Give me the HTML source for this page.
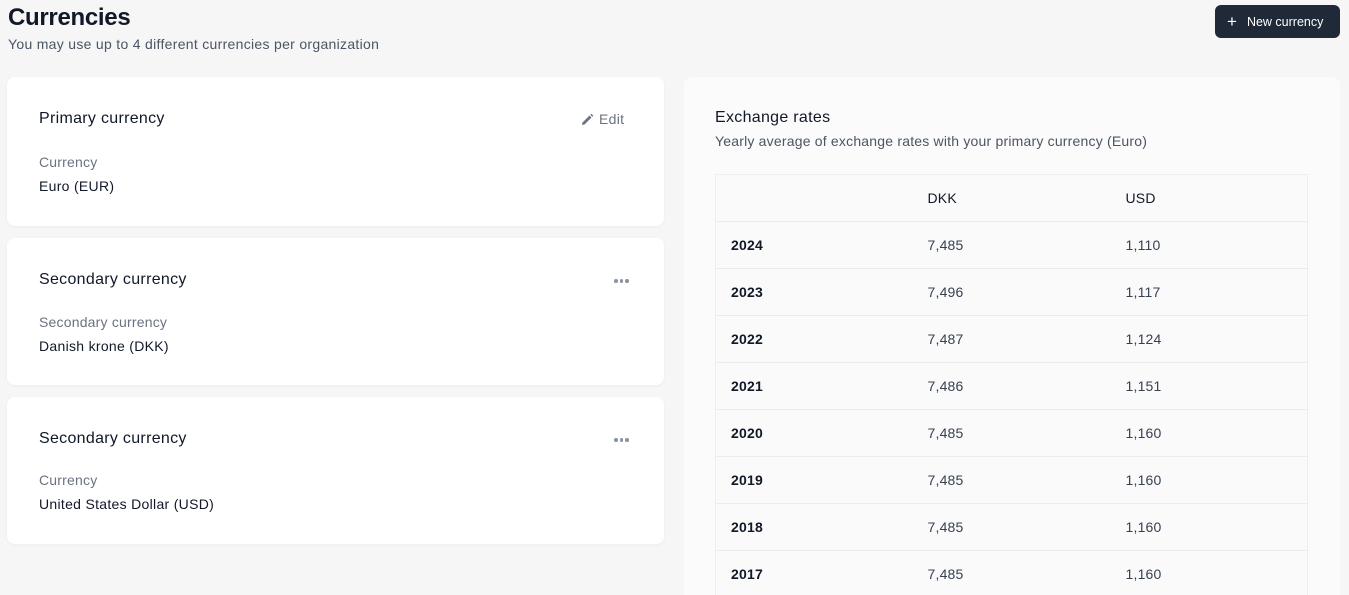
<!DOCTYPE html>
<html><head><meta charset="utf-8"><style>
*{box-sizing:border-box;margin:0;padding:0}
html,body{width:1349px;height:595px;overflow:hidden}
body{background:#f6f6f6;font-family:"Liberation Sans",sans-serif;color:#111827;position:relative}
.abs{position:absolute}
h1{position:absolute;left:8px;top:4px;font-size:24px;font-weight:700;color:#111827;letter-spacing:-0.3px}
.sub{left:8px;top:36px;font-size:14px;color:#4b5563;letter-spacing:0.3px}
.btn{left:1215px;top:5px;width:125px;height:33px;background:#1f2937;border-radius:6px;color:#fff;font-size:12.5px;display:flex;align-items:center;padding-left:12px}
.card{left:7px;width:657px;background:#fff;border-radius:8px;box-shadow:0 1px 3px rgba(0,0,0,0.04)}
.ct{position:absolute;left:32px;top:33px;font-size:16px;color:#111827;letter-spacing:0.3px}
.cl{position:absolute;left:32px;top:77px;font-size:14px;color:#6b7280;letter-spacing:0.2px}
.cv{position:absolute;left:32px;top:101px;font-size:14px;color:#111827;letter-spacing:0.3px}
.dots{position:absolute;left:607px;top:41px;display:flex;gap:2px}
.dots i{width:3.5px;height:3.5px;border-radius:50%;background:#8b95a5;display:block}
.panel{left:684px;top:77px;width:656px;height:518px;background:#fbfbfb;border-radius:8px 8px 0 0;overflow:hidden}
table{position:absolute;left:31px;top:97px;width:593px;border-collapse:collapse;background:#fafafa;border:1px solid #eeeeee;font-size:14px}
td{height:47px;border-bottom:1px solid #ececec;color:#374151;letter-spacing:0.2px}
td:first-child{padding-left:15px;width:212px;font-weight:700;color:#111827}
td:nth-child(2){width:198px}
tr.h td{color:#111827;font-weight:400}
</style></head><body>
<h1>Currencies</h1>
<div class="abs sub">You may use up to 4 different currencies per organization</div>
<div class="abs btn"><span style="font-size:17px;margin-right:10px;line-height:1">+</span>New currency</div>

<div class="abs card" style="top:77px;height:149px">
<div class="ct">Primary currency</div>
<div style="position:absolute;left:574px;top:34px;font-size:14px;color:#6b7280;display:flex;align-items:center;gap:5px;letter-spacing:0.3px"><svg width="13" height="13" viewBox="0 0 13 13"><path d="M1 12 L1.5 9.5 L8.5 2.5 L10.5 4.5 L3.5 11.5 Z M9.3 1.7 L10.3 0.7 L12.3 2.7 L11.3 3.7 Z" fill="#6b7280"/></svg>Edit</div>
<div class="cl">Currency</div>
<div class="cv">Euro (EUR)</div>
</div>
<div class="abs card" style="top:238px;height:147px">
<div class="ct">Secondary currency</div>
<div class="dots"><i></i><i></i><i></i></div>
<div class="cl" style="top:76px">Secondary currency</div>
<div class="cv" style="top:100px">Danish krone (DKK)</div>
</div>
<div class="abs card" style="top:397px;height:147px">
<div class="ct">Secondary currency</div>
<div class="dots"><i></i><i></i><i></i></div>
<div class="cl" style="top:75px">Currency</div>
<div class="cv" style="top:99px">United States Dollar (USD)</div>
</div>

<div class="abs panel">
<div style="position:absolute;left:31px;top:32px;font-size:16px;color:#111827;letter-spacing:0.3px">Exchange rates</div>
<div style="position:absolute;left:31px;top:56px;font-size:14px;color:#4b5563;letter-spacing:0.2px">Yearly average of exchange rates with your primary currency (Euro)</div>
<table>
<tr class="h"><td></td><td>DKK</td><td>USD</td></tr>
<tr><td>2024</td><td>7,485</td><td>1,110</td></tr>
<tr><td>2023</td><td>7,496</td><td>1,117</td></tr>
<tr><td>2022</td><td>7,487</td><td>1,124</td></tr>
<tr><td>2021</td><td>7,486</td><td>1,151</td></tr>
<tr><td>2020</td><td>7,485</td><td>1,160</td></tr>
<tr><td>2019</td><td>7,485</td><td>1,160</td></tr>
<tr><td>2018</td><td>7,485</td><td>1,160</td></tr>
<tr><td>2017</td><td>7,485</td><td>1,160</td></tr>
</table>
</div>
</body></html>
